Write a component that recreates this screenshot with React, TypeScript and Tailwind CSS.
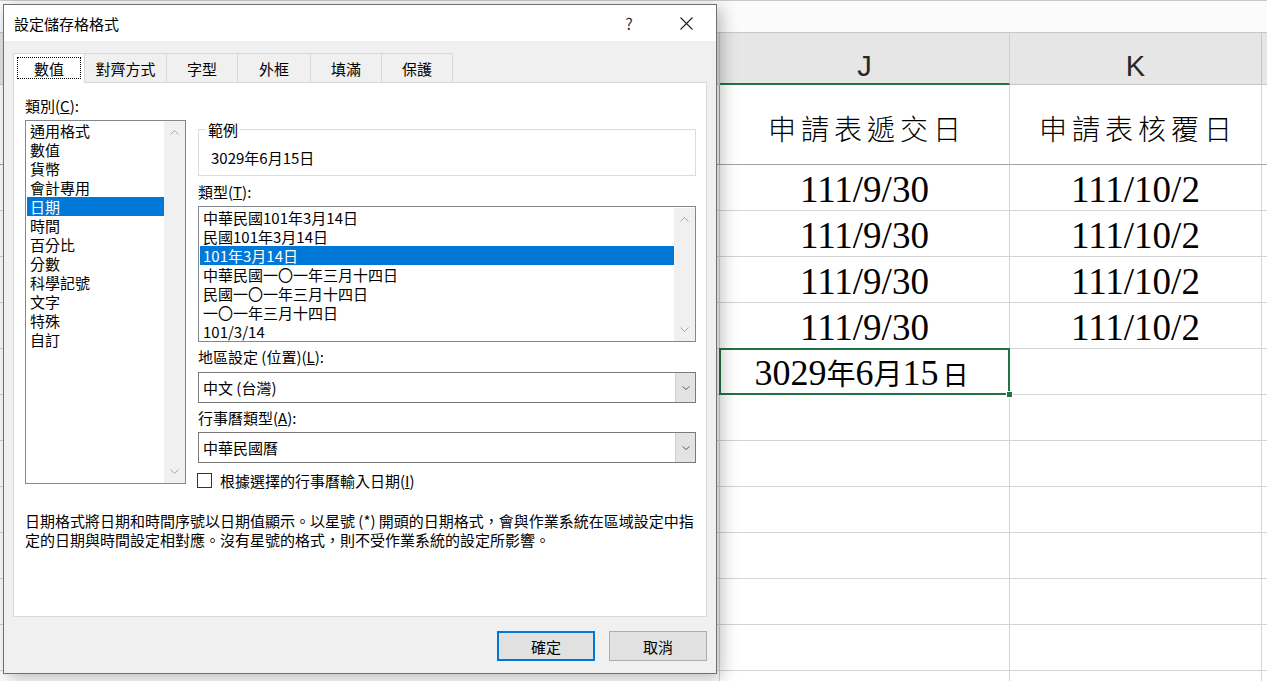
import React from 'react';

const categories = ['通用格式', '數值', '貨幣', '會計專用', '日期', '時間', '百分比', '分數', '科學記號', '文字', '特殊', '自訂'];
const dateTypes = ['中華民國101年3月14日', '民國101年3月14日', '101年3月14日', '中華民國一〇一年三月十四日', '民國一〇一年三月十四日', '一〇一年三月十四日', '101/3/14'];
const tabs = [
  { label: '對齊方式', w: 'w-[82px]' },
  { label: '字型', w: 'w-[71px]' },
  { label: '外框', w: 'w-[73px]' },
  { label: '填滿', w: 'w-[71px]' },
  { label: '保護', w: 'w-[71px]' },
];

const ChevronUp = () => (
  <svg width="9" height="5" viewBox="0 0 9 5">
    <path d="M0.5 4.5 L4.5 0.5 L8.5 4.5" fill="none" stroke="currentColor" strokeWidth="1" />
  </svg>
);

const ChevronDown = ({ w = 9, h = 5 }: { w?: number; h?: number }) => (
  <svg width={w} height={h} viewBox={`0 0 ${w} ${h}`}>
    <path d={`M0.5 0.5 L${w / 2} ${h - 0.5} L${w - 0.5} 0.5`} fill="none" stroke="currentColor" strokeWidth="1" />
  </svg>
);

const ListBox = ({ items, selected, className }: { items: string[]; selected: number; className: string }) => (
  <div className={`flex border border-[#828790] bg-white ${className}`}>
    <div className="flex-1 min-w-0 pl-[1px]">
      {items.map((it, i) => (
        <div
          key={it}
          className={`h-[19px] leading-[19px] pl-[3px] whitespace-nowrap ${i === selected ? 'bg-[#0078d7] text-white' : 'text-black'}`}
        >
          {it}
        </div>
      ))}
    </div>
    <div className="w-[21px] bg-[#f0f0f0] flex flex-col justify-between items-center py-[9px] text-[#a8a8a8]">
      <ChevronUp />
      <ChevronDown />
    </div>
  </div>
);

const Select = ({ value }: { value: string }) => (
  <div className="flex h-[31px] border border-[#7a7a7a] bg-white">
    <div className="flex-1 pl-[4px] leading-[29px]">{value}</div>
    <div className="w-[20px] bg-[#e3e3e3] border-l border-[#d0d0d0] flex items-center justify-center text-[#606060]">
      <ChevronDown w={8} h={4} />
    </div>
  </div>
);

const FormatDialog = () => (
  <div className="absolute left-[3px] top-[4px] w-[714px] h-[670px] border border-[#707070] bg-[#f0f0f0] shadow-[4px_4px_16px_rgba(0,0,0,0.28)] flex flex-col text-[15px] text-black font-['Noto_Sans_CJK_TC','Noto_Sans',sans-serif]">
    {/* title bar */}
    <div className="h-[36px] bg-white flex items-center pl-[10px] pr-[7px]">
      <span className="leading-[19px]">設定儲存格格式</span>
      <div className="ml-auto flex items-center gap-[11px]">
        <div className="w-[46px] text-center text-[16px] text-[#333]">?</div>
        <div className="w-[46px] flex justify-center text-[#222]">
          <svg width="13" height="13" viewBox="0 0 13 13">
            <path d="M0.5 0.5 L12.5 12.5 M12.5 0.5 L0.5 12.5" stroke="currentColor" strokeWidth="1.1" />
          </svg>
        </div>
      </div>
    </div>

    <div className="px-[9px] pt-[12px]">
      {/* tabs */}
      <div className="flex items-end h-[29px]">
        <div className="relative z-10 w-[72px] h-[30px] -mb-[1px] bg-white border-t border-l border-r border-[#d9d9d9] p-[3px] pb-[4px]">
          <div className="h-full border border-dotted border-black flex items-center justify-center leading-[19px]">數值</div>
        </div>
        {tabs.map(t => (
          <div
            key={t.label}
            className={`${t.w} h-[29px] border-t border-r border-[#d9d9d9] bg-[#f0f0f0] flex items-center justify-center leading-[19px]`}
          >
            {t.label}
          </div>
        ))}
      </div>

      {/* panel */}
      <div className="h-[535px] bg-white border border-[#d9d9d9] pl-[11px] pr-[10px] pt-[13px]">
        <div className="flex items-start gap-[12px]">
          <div className="w-[161px]">
            <div className="leading-[19px]">
              類別(<span className="underline">C</span>):
            </div>
            <ListBox items={categories} selected={4} className="mt-[5px] h-[364px]" />
          </div>

          <div className="flex-1 pt-[24px]">
            <fieldset className="border border-[#dcdcdc] h-[56px]">
              <legend className="ml-[7px] px-[2px] leading-[19px]">範例</legend>
              <div className="pl-[12px] pt-[9px] leading-[19px]">3029年6月15日</div>
            </fieldset>

            <div className="mt-[6px] leading-[19px]">
              類型(<span className="underline">T</span>):
            </div>
            <ListBox items={dateTypes} selected={2} className="mt-[5px] h-[136px] pt-[1px]" />

            <div className="mt-[5px] leading-[19px]">
              地區設定 (位置)(<span className="underline">L</span>):
            </div>
            <div className="mt-[6px]">
              <Select value="中文 (台灣)" />
            </div>

            <div className="mt-[5px] leading-[19px]">
              行事曆類型(<span className="underline">A</span>):
            </div>
            <div className="mt-[5px]">
              <Select value="中華民國曆" />
            </div>

            <div className="mt-[8px] flex items-center gap-[8px] leading-[19px]">
              <div className="w-[15px] h-[15px] -ml-[1px] border border-[#333] bg-white" />
              <span>
                根據選擇的行事曆輸入日期(<span className="underline">I</span>)
              </span>
            </div>
          </div>
        </div>

        <div className="mt-[21px] leading-[19px]">
          日期格式將日期和時間序號以日期值顯示。以星號 (*) 開頭的日期格式，會與作業系統在區域設定中指
          <br />
          定的日期與時間設定相對應。沒有星號的格式，則不受作業系統的設定所影響。
        </div>
      </div>
    </div>

    {/* buttons */}
    <div className="mt-[14px] flex justify-end gap-[14px] pr-[9px]">
      <button className="w-[98px] h-[30px] border-2 border-[#0078d7] bg-[#e1e1e1] leading-[19px]">確定</button>
      <button className="w-[98px] h-[30px] border border-[#adadad] bg-[#e1e1e1] leading-[19px]">取消</button>
    </div>
  </div>
);

const cell = 'border-r border-b border-[#d4d4d4]';
const serif = "font-['Liberation_Serif','Noto_Sans_CJK_TC',serif]";

const Sheet = () => {
  const dataRows = [0, 1, 2, 3];
  const emptyRows = [0, 1, 2, 3, 4, 5, 6];
  return (
    <div className="bg-white">
      {/* formula strip */}
      <div className="h-[33px] border-t border-b border-[#c8c8c8] bg-[#fbfbfb]" />

      {/* column headers */}
      <div className="grid grid-cols-[720px_290px_252px_1fr] grid-rows-[52px] h-[52px] bg-[#e6e6e6] text-[29px] leading-[29px] text-[#262626] font-['Liberation_Sans',sans-serif]">
        <div className="border-r border-b border-[#c6c6c6]" />
        <div className="border-r border-[#cfcfcf] border-b-2 border-b-[#217346] flex items-center justify-center pt-[16px]">J</div>
        <div className="border-r border-b border-[#c6c6c6] flex items-center justify-center pt-[15px]">K</div>
        <div className="border-b border-[#c6c6c6]" />
      </div>

      {/* title row */}
      <div className="grid grid-cols-[720px_290px_252px_1fr] grid-rows-[80px] h-[80px] text-[28px] leading-[36px] text-black font-['Noto_Sans_CJK_TC',sans-serif]">
        <div className="border-r border-b border-[#a3a3a3]" />
        <div className="border-r border-[#d4d4d4] border-b border-b-[#a3a3a3] flex items-center justify-center pt-[6px]">
          <span className="tracking-[5px] -mr-[5px] font-light">申請表遞交日</span>
        </div>
        <div className="border-r border-[#d4d4d4] border-b border-b-[#a3a3a3] flex items-center justify-center pt-[6px]">
          <span className="tracking-[5px] -mr-[5px] font-light">申請表核覆日</span>
        </div>
        <div className="border-b border-[#a3a3a3]" />
      </div>

      {dataRows.map(r => (
        <div key={r} className={`grid grid-cols-[720px_290px_252px_1fr] grid-rows-[46px] h-[46px] text-[37px] text-black ${serif}`}>
          <div className={cell} />
          <div className={`${cell} flex items-center justify-center leading-none pt-[3px]`}>111/9/30</div>
          <div className={`${cell} flex items-center justify-center leading-none pt-[3px]`}>111/10/2</div>
          <div className="border-b border-[#d4d4d4]" />
        </div>
      ))}

      {/* active cell row */}
      <div className={`grid grid-cols-[720px_290px_252px_1fr] grid-rows-[46px] h-[46px] text-[36px] text-black ${serif}`}>
        <div className={cell} />
        <div className={`${cell} relative flex items-center justify-center leading-none pt-[2px]`}>
          <span className="-ml-[6px]">
            3029<span className="text-[29px] font-['Noto_Sans_CJK_TC',sans-serif]">年</span>6
            <span className="text-[29px] font-['Noto_Sans_CJK_TC',sans-serif]">月</span>15
            <span className="text-[26px] font-['Noto_Sans_CJK_TC',sans-serif] ml-[4px]">日</span>
          </span>
          <div className="absolute -left-[1px] -top-[1px] -right-[1px] -bottom-[1px] border-2 border-[#217346]" />
          <div className="absolute -right-[4px] -bottom-[4px] w-[7px] h-[7px] bg-[#217346] border border-white" />
        </div>
        <div className={cell} />
        <div className="border-b border-[#d4d4d4]" />
      </div>

      {emptyRows.map(r => (
        <div key={r} className="grid grid-cols-[720px_290px_252px_1fr] grid-rows-[46px] h-[46px]">
          <div className={cell} />
          <div className={cell} />
          <div className={cell} />
          <div className="border-b border-[#d4d4d4]" />
        </div>
      ))}
    </div>
  );
};

export default function App() {
  return (
    <div className="relative w-[1267px] h-[681px] overflow-hidden bg-white">
      <Sheet />
      <FormatDialog />
    </div>
  );
}
